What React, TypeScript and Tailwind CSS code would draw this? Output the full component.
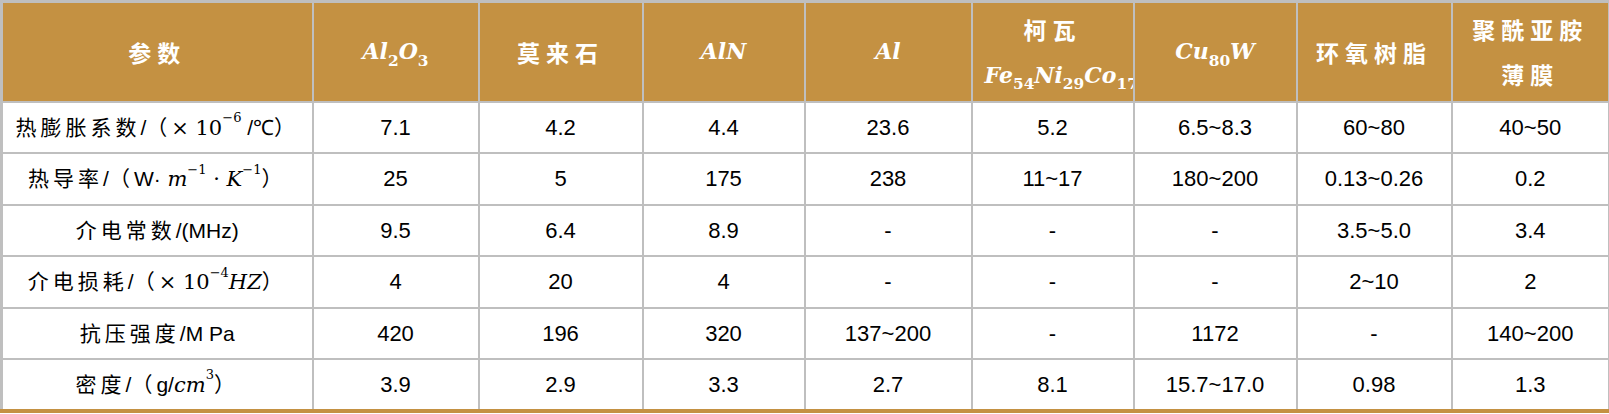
import React from 'react';

const GOLD = 'bg-[#c49142]';

const cjk = '[font-family:"Noto_Sans_CJK_SC",sans-serif]';
const math = '[font-family:"DejaVu_Serif","Liberation_Serif",serif] tracking-normal';

function M({ children }: { children: React.ReactNode }) {
  return <span className={`${math} italic`}>{children}</span>;
}

function Sub({ children }: { children: React.ReactNode }) {
  return <sub className={`${math} not-italic font-semibold text-[0.7em] align-[-0.18em]`}>{children}</sub>;
}

function Sup({ children }: { children: React.ReactNode }) {
  return <sup className={`${math} not-italic text-[0.62em] align-[0.45em]`}>{children}</sup>;
}

function Ar({ children }: { children: React.ReactNode }) {
  return <span className='[font-family:"Liberation_Sans",Arial,sans-serif] tracking-normal'>{children}</span>;
}

const HEAD_CJK = `${cjk} font-bold text-[23px] tracking-[6px] text-white`;
const HEAD_MATH = `${math} font-bold italic text-[22px] text-white`;

const rows: { label: React.ReactNode; values: string[] }[] = [
  {
    label: (
      <>
        热膨胀系数<Ar>/</Ar>（<span className={math}>× 10</span>
        <Sup>−6</Sup>
        <Ar> /℃</Ar>）
      </>
    ),
    values: ['7.1', '4.2', '4.4', '23.6', '5.2', '6.5~8.3', '60~80', '40~50'],
  },
  {
    label: (
      <>
        热导率<Ar>/</Ar>（<Ar>W·</Ar>
        <M> m</M>
        <Sup>−1</Sup>
        <span className={math}> · </span>
        <M>K</M>
        <Sup>−1</Sup>）
      </>
    ),
    values: ['25', '5', '175', '238', '11~17', '180~200', '0.13~0.26', '0.2'],
  },
  {
    label: (
      <>
        介电常数<Ar>/(MHz)</Ar>
      </>
    ),
    values: ['9.5', '6.4', '8.9', '-', '-', '-', '3.5~5.0', '3.4'],
  },
  {
    label: (
      <>
        介电损耗<Ar>/</Ar>（<span className={math}>× 10</span>
        <Sup>−4</Sup>
        <M>HZ</M>）
      </>
    ),
    values: ['4', '20', '4', '-', '-', '-', '2~10', '2'],
  },
  {
    label: (
      <>
        抗压强度<Ar>/M Pa</Ar>
      </>
    ),
    values: ['420', '196', '320', '137~200', '-', '1172', '-', '140~200'],
  },
  {
    label: (
      <>
        密度<Ar>/</Ar>（<Ar>g/</Ar>
        <M>cm</M>
        <Sup>3</Sup>）
      </>
    ),
    values: ['3.9', '2.9', '3.3', '2.7', '8.1', '15.7~17.0', '0.98', '1.3'],
  },
];

const widths = [311, 166, 164, 162, 167, 162, 163, 155, 158];

export default function App() {
  return (
    <div className="bg-white w-[1609px] h-[414px] overflow-hidden">
      <table className="table-fixed border-collapse w-[1608px] border-[3px] border-[#bfbfbf] border-b-[4px] border-b-[#c49142]">
        <colgroup>
          {widths.map((w, i) => (
            <col key={i} style={{ width: w }} />
          ))}
        </colgroup>
        <thead>
          <tr className="h-[100px]">
            <th className={`${GOLD} border-2 border-[#bfbfbf] text-center`}>
              <span className={HEAD_CJK}>参数</span>
            </th>
            <th className={`${GOLD} border-2 border-[#bfbfbf] text-center`}>
              <span className={HEAD_MATH}>
                Al<Sub>2</Sub>O<Sub>3</Sub>
              </span>
            </th>
            <th className={`${GOLD} border-2 border-[#bfbfbf] text-center`}>
              <span className={HEAD_CJK}>莫来石</span>
            </th>
            <th className={`${GOLD} border-2 border-[#bfbfbf] text-center`}>
              <span className={HEAD_MATH}>AlN</span>
            </th>
            <th className={`${GOLD} border-2 border-[#bfbfbf] text-center`}>
              <span className={HEAD_MATH}>Al</span>
            </th>
            <th className={`${GOLD} border-2 border-[#bfbfbf] p-0`}>
              <div className="flex flex-col gap-[12px]">
                <div className={`${HEAD_CJK} text-center`}>柯瓦</div>
                <div className={`${HEAD_MATH} text-[21px] whitespace-nowrap overflow-hidden pl-[12px] text-left`}>
                  Fe<Sub>54</Sub>Ni<Sub>29</Sub>Co<Sub>17</Sub>
                </div>
              </div>
            </th>
            <th className={`${GOLD} border-2 border-[#bfbfbf] text-center`}>
              <span className={HEAD_MATH}>
                Cu<Sub>80</Sub>W
              </span>
            </th>
            <th className={`${GOLD} border-2 border-[#bfbfbf] text-center`}>
              <span className={HEAD_CJK}>环氧树脂</span>
            </th>
            <th className={`${GOLD} border-2 border-[#bfbfbf] text-center`}>
              <div className="flex flex-col gap-[10px]">
                <div className={HEAD_CJK}>聚酰亚胺</div>
                <div className={HEAD_CJK}>薄膜</div>
              </div>
            </th>
          </tr>
        </thead>
        <tbody>
          {rows.map((r, i) => (
            <tr key={i} className="h-[51.5px]">
              <td
                className={`border-2 border-[#bfbfbf] text-center whitespace-nowrap text-[21px] tracking-[4px] text-black ${cjk}`}
              >
                {r.label}
              </td>
              {r.values.map((v, j) => (
                <td
                  key={j}
                  className='border-2 border-[#bfbfbf] text-center text-[22px] text-black [font-family:"Liberation_Sans",Arial,sans-serif]'
                >
                  {v}
                </td>
              ))}
            </tr>
          ))}
        </tbody>
      </table>
    </div>
  );
}
